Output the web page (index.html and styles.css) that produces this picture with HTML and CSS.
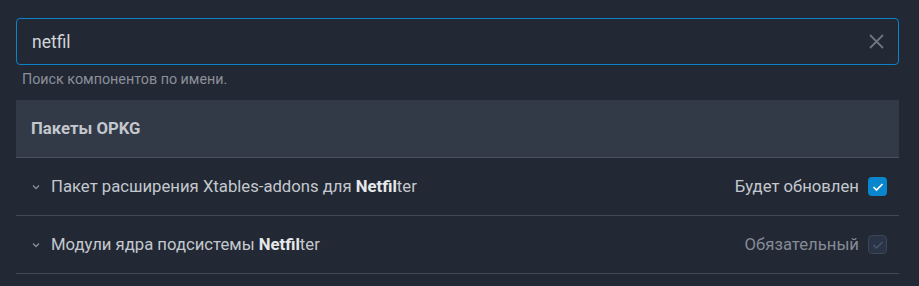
FILE: index.html
```html
<!DOCTYPE html>
<html lang="ru">
<head>
<meta charset="utf-8">
<link rel="stylesheet" href="styles.css">
</head>
<body>
<div class="page">
  <div class="search">
    <span class="search-value">netfil</span>
    <svg class="clear" width="15" height="15" viewBox="0 0 15 15"><path d="M1 1L14 14M14 1L1 14" stroke="#6e7581" stroke-width="1.8" fill="none"/></svg>
  </div>
  <div class="hint">Поиск компонентов по имени.</div>
  <div class="group">
    <div class="group-head">Пакеты OPKG</div>
    <div class="row">
      <svg class="chev" width="8" height="6" viewBox="0 0 8 6"><path d="M1 1.5L4 4.5L7 1.5" stroke="#8a909a" stroke-width="1.3" fill="none"/></svg>
      <span class="name">Пакет расширения Xtables-addons для <b>Netfil</b>ter</span>
      <span class="status">Будет обновлен</span>
      <span class="cb on"><svg width="12" height="10" viewBox="0 0 12 10"><path d="M1.5 5L4.5 8L10.5 2" stroke="#fff" stroke-width="1.6" fill="none"/></svg></span>
    </div>
    <div class="row">
      <svg class="chev" width="8" height="6" viewBox="0 0 8 6"><path d="M1 1.5L4 4.5L7 1.5" stroke="#8a909a" stroke-width="1.3" fill="none"/></svg>
      <span class="name">Модули ядра подсистемы <b>Netfil</b>ter</span>
      <span class="status dim">Обязательный</span>
      <span class="cb off"><svg width="12" height="10" viewBox="0 0 12 10"><path d="M1.5 5L4.5 8L10.5 2" stroke="#485670" stroke-width="1.3" fill="none"/></svg></span>
    </div>
  </div>
</div>
</body>
</html>
```
FILE: styles.css
```css
html, body {
  margin: 0;
  padding: 0;
  background: #222834;
  font-family: Roboto, "Noto Sans", sans-serif;
}
.page {
  padding: 18px 20px 0 16px;
}
.search {
  height: 47px;
  box-sizing: border-box;
  border: 1px solid #0b83c9;
  border-radius: 4px;
  display: flex;
  align-items: center;
  padding: 0 14px 0 15px;
}
.search-value {
  flex: 1;
  color: #d2d5da;
  font-size: 17.5px;
}
.clear {
  display: block;
}
.hint {
  color: #8b9099;
  font-size: 14.3px;
  padding: 6px 0 0 6px;
  height: 35px;
  box-sizing: border-box;
}
.group-head {
  background: #333a47;
  height: 57px;
  display: flex;
  align-items: center;
  padding-left: 15px;
  color: #c3c7ce;
  font-size: 16.7px;
  font-weight: bold;
  border-bottom: 1px solid #4b525e;
}
.row {
  display: flex;
  align-items: center;
  height: 58px;
  box-sizing: border-box;
  border-bottom: 1px solid #434a56;
  padding: 0 12px 0 15px;
}
.chev {
  margin: 1px 11px 0 1px;
}
.name {
  flex: 1;
  color: #c4c8ce;
  font-size: 16.7px;
}
.name b {
  color: #e6e8eb;
}
.status {
  color: #c4c8ce;
  font-size: 16.7px;
  margin-right: 9px;
}
.status.dim {
  color: #858b95;
}
.cb {
  width: 19px;
  height: 19px;
  box-sizing: border-box;
  border-radius: 4px;
  display: flex;
  align-items: center;
  justify-content: center;
}
.cb.on {
  background: #0a86cf;
}
.cb.off {
  background: #2b3446;
  border: 1px solid #3b4659;
}
```
